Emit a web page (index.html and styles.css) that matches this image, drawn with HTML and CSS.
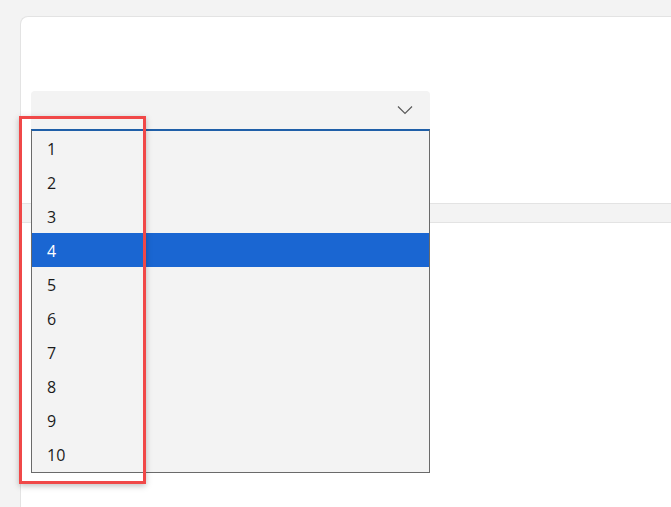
FILE: index.html
```html
<!DOCTYPE html>
<html>
<head>
<meta charset="utf-8">
<link rel="stylesheet" href="styles.css">
</head>
<body>
<div class="page">
  <section class="card card-top">
    <div class="select">
      <div class="select-field">
        <svg class="chevron" width="16" height="10" viewBox="0 0 16 10"><path d="M1 1.5 L8 8.5 L15 1.5" fill="none" stroke="#5a5a5a" stroke-width="1.2"/></svg>
      </div>
      <ul class="listbox">
        <li>1</li>
        <li>2</li>
        <li>3</li>
        <li class="selected">4</li>
        <li>5</li>
        <li>6</li>
        <li>7</li>
        <li>8</li>
        <li>9</li>
        <li>10</li>
      </ul>
    </div>
  </section>
  <section class="card card-bottom"></section>
</div>
<div class="highlight-box"></div>
</body>
</html>
```
FILE: styles.css
```css
html, body {
  margin: 0;
  padding: 0;
  height: 100%;
  overflow: hidden;
}
body {
  background: #f3f3f3;
  font-family: "Segoe UI", "Open Sans", "Noto Sans", sans-serif;
  color: #1b1b1b;
  position: relative;
}
.page {
  display: flex;
  flex-direction: column;
  gap: 18px;
  padding: 16px 0 0 20px;
  height: 100%;
  box-sizing: border-box;
}
.card {
  background: #ffffff;
  border: 1px solid #e3e3e3;
  border-right: none;
}
.card-top {
  height: 188px;
  box-sizing: border-box;
  border-radius: 8px 0 0 0;
  padding: 74px 0 0 10px;
}
.card-bottom {
  flex: 1;
  border-bottom: none;
}
.select {
  position: relative;
  width: 399px;
}
.select-field {
  height: 38px;
  background: #f3f3f3;
  border-radius: 4px 4px 0 0;
  display: flex;
  justify-content: flex-end;
  align-items: center;
  padding-right: 17px;
}
.chevron {
  display: block;
}
.listbox {
  position: absolute;
  top: 38px;
  left: 0;
  width: 399px;
  box-sizing: border-box;
  margin: 0;
  padding: 0 0 1px;
  list-style: none;
  background: #f3f3f3;
  border: 1px solid #6a6a6a;
  border-top: 2px solid #1f5fa8;
  z-index: 2;
}
.listbox li {
  height: 34px;
  line-height: 36px;
  padding-left: 15px;
  font-size: 16px;
}
.listbox li.selected {
  background: #1a66d2;
  color: #ffffff;
}
.highlight-box {
  position: absolute;
  left: 19px;
  top: 116px;
  width: 127px;
  height: 368px;
  box-sizing: border-box;
  border: 3px solid #f04848;
  box-shadow: 0 2px 6px rgba(0,0,0,0.25);
  z-index: 5;
}
```
